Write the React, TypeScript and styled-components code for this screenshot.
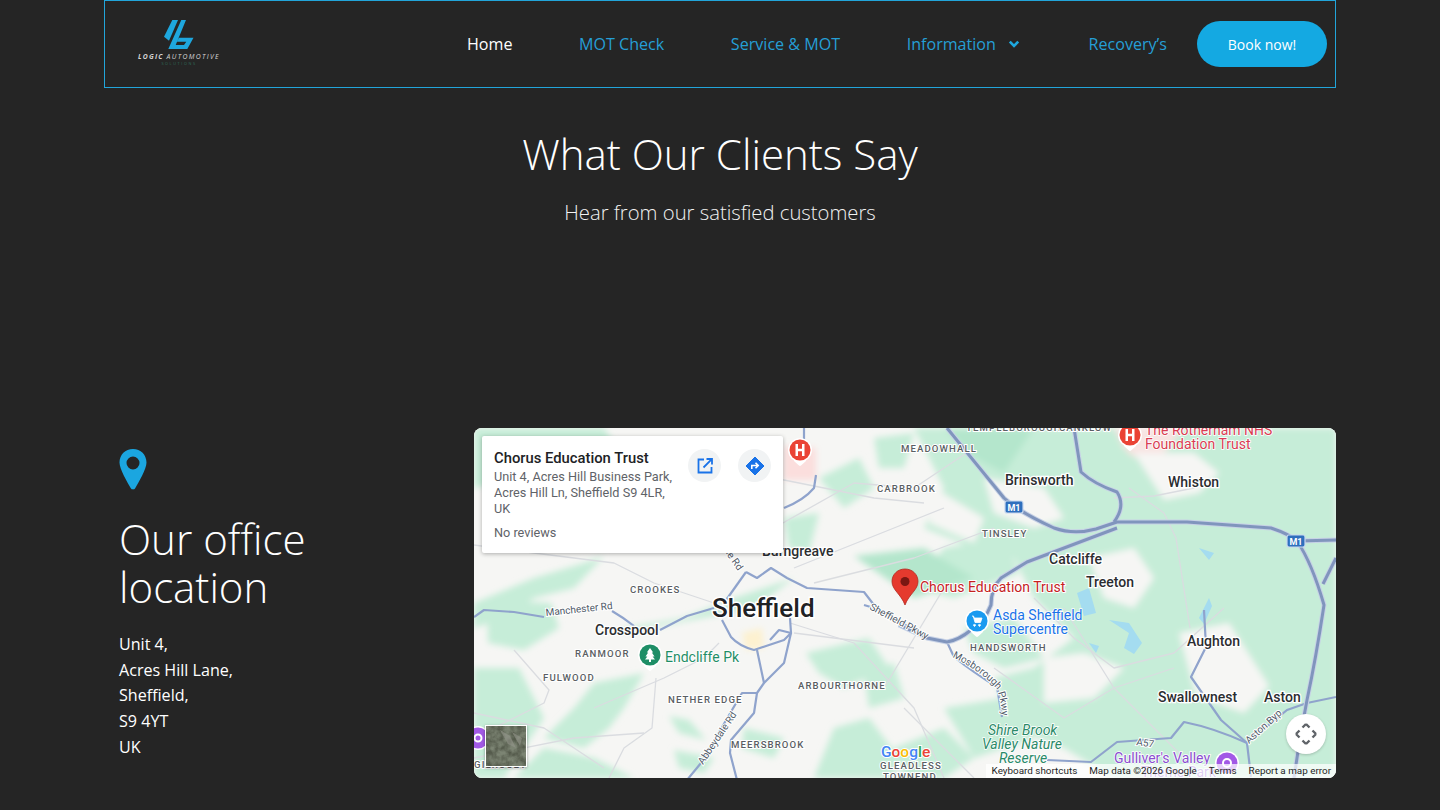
import React from "react";
import styled, { createGlobalStyle } from "styled-components";

const Global = createGlobalStyle`
  html, body { margin: 0; padding: 0; background: #252525; overflow: hidden; }
  body { font-family: "Open Sans", "Liberation Sans", sans-serif; color: #fff; }
`;

const Page = styled.div`
  width: 1232px;
  margin: 0 auto;
  height: 810px;
`;

const Header = styled.header`
  box-sizing: border-box;
  height: 88px;
  border: 1px solid #22a5da;
  display: flex;
  align-items: center;
  padding: 0 8px 0 32px;
`;

const LogoBox = styled.div`
  width: 84px;
  display: flex;
  flex-direction: column;
  align-items: center;
  margin-top: -2px;
`;

const LogoMark = styled.svg`
  display: block;
  margin-left: -1px;
`;

const LogoName = styled.div`
  font: italic 700 6.8px/8px "Open Sans", sans-serif;
  letter-spacing: 1.2px;
  white-space: nowrap;
  color: #d5d5d5;
  margin-top: 4px;
  & > span { font-weight: 400; letter-spacing: 1.35px; }
`;

const LogoSub = styled.div`
  font: 400 3.8px/5px "Open Sans", sans-serif;
  letter-spacing: 1.6px;
  color: #2f6a58;
  white-space: nowrap;
`;

const Nav = styled.nav`
  margin-left: auto;
  display: flex;
  align-items: center;
  gap: 66.6px;
`;

const NavLink = styled.a<{ $active?: boolean }>`
  font-size: 16.1px;
  line-height: 24px;
  color: ${(p) => (p.$active ? "#ffffff" : "#259fd6")};
  display: flex;
  align-items: center;
  gap: 12px;
  white-space: nowrap;
`;

const ChevronIcon = styled.svg`
  margin-right: 2px;
`;

const BookButton = styled.a`
  margin-left: 30px;
  width: 130px;
  height: 46px;
  border-radius: 23px;
  background: #14a9e2;
  color: #fff;
  font-size: 14px;
  display: flex;
  align-items: center;
  justify-content: center;
`;

const Intro = styled.section`
  padding-top: 36px;
  height: 304px;
  box-sizing: border-box;
  text-align: center;
`;

const IntroTitle = styled.h2`
  margin: 0;
  font-size: 42px;
  line-height: 60px;
  font-weight: 300;
  color: #fff;
`;

const IntroSub = styled.p`
  margin: 13px 0 0;
  font-size: 20.25px;
  line-height: 30px;
  font-weight: 300;
  color: #f2f2f2;
`;

const Location = styled.section`
  margin-top: 36px;
  display: flex;
  align-items: stretch;
`;

const Office = styled.div`
  width: 370px;
  box-sizing: border-box;
  padding: 21px 0 0 15px;
`;

const OfficeTitle = styled.h3`
  margin: 20px 0 0;
  font-size: 42px;
  line-height: 48px;
  font-weight: 300;
  color: #fff;
`;

const Address = styled.p`
  margin: 21px 0 0;
  font-size: 16.1px;
  line-height: 25.7px;
  color: #fff;
`;

const MapFrame = styled.div`
  position: relative;
  width: 862px;
  height: 350px;
  border-radius: 8px;
  overflow: hidden;
  background: #f6f6f4;
  font-family: Roboto, "Liberation Sans", sans-serif;
`;

const MapSvg = styled.svg`
  display: block;
  & path { stroke-linejoin: round; }
`;

const InfoCard = styled.div`
  position: absolute;
  left: 8px;
  top: 8px;
  width: 301px;
  height: 117px;
  box-sizing: border-box;
  padding: 13px 12px;
  background: #fff;
  border-radius: 2px;
  box-shadow: 0 1px 4px rgba(0, 0, 0, 0.3);
  display: flex;
  justify-content: space-between;
`;

const InfoText = styled.div`
  width: 182px;
`;

const InfoName = styled.div`
  font-size: 14.8px;
  line-height: 18px;
  font-weight: 500;
  color: #202124;
  white-space: nowrap;
`;

const InfoAddress = styled.div`
  margin-top: 2px;
  font-size: 12.7px;
  line-height: 16px;
  color: #5f6368;
`;

const InfoReviews = styled.div`
  margin-top: 8px;
  font-size: 12.7px;
  line-height: 16px;
  color: #5f6368;
`;

const InfoActions = styled.div`
  display: flex;
  gap: 17px;
`;

const RoundAction = styled.div`
  width: 33px;
  height: 33px;
  border-radius: 50%;
  background: #f1f3f4;
  display: flex;
  align-items: center;
  justify-content: center;
`;

const FullscreenButton = styled.div`
  position: absolute;
  right: 10px;
  bottom: 24px;
  width: 40px;
  height: 40px;
  border-radius: 50%;
  background: #fff;
  box-shadow: 0 1px 3px rgba(0, 0, 0, 0.2);
  display: flex;
  align-items: center;
  justify-content: center;
`;

const Satellite = styled.div`
  position: absolute;
  left: 11px;
  bottom: 11px;
  width: 40px;
  height: 40px;
  border: 1.5px solid #fff;
  box-shadow: 0 1px 3px rgba(0, 0, 0, 0.35);
  overflow: hidden;
`;

const Attribution = styled.div`
  position: absolute;
  right: 0;
  bottom: 0;
  display: flex;
  font-size: 9.9px;
  line-height: 14px;
  color: #1f1f1f;
  white-space: nowrap;
`;

const AttributionItem = styled.span`
  padding: 0 6px;
  background: rgba(255, 255, 255, 0.72);
  &:last-child { padding-right: 5px; }
`;

const Label = styled.text<{ $kind: string }>`
  font-family: Roboto, "Liberation Sans", sans-serif;
  ${(p) =>
    p.$kind === "city"
      ? "font-size: 26px; font-weight: 500; fill: #202124; stroke: #fff; stroke-width: 3px; paint-order: stroke;"
      : p.$kind === "town"
      ? "font-size: 14px; font-weight: 500; fill: #2b2d30; stroke: #fff; stroke-width: 2.5px; paint-order: stroke;"
      : p.$kind === "area"
      ? "font-size: 9.6px; font-weight: 500; letter-spacing: 1.1px; fill: #5a5e63; stroke: #fff; stroke-width: 2px; paint-order: stroke;"
      : p.$kind === "road"
      ? "font-size: 10px; fill: #4f5a68; stroke: #fff; stroke-width: 2px; paint-order: stroke;"
      : p.$kind === "red"
      ? "font-size: 14px; fill: #c5221f; stroke: #fff; stroke-width: 2px; paint-order: stroke;"
      : p.$kind === "hospital"
      ? "font-size: 14px; fill: #d93c52; stroke: #fff; stroke-width: 1.5px; paint-order: stroke;"
      : p.$kind === "shop"
      ? "font-size: 14px; fill: #1a73e8; stroke: #fff; stroke-width: 1.5px; paint-order: stroke;"
      : p.$kind === "park"
      ? "font-size: 14px; fill: #1e8e66; stroke: #fff; stroke-width: 1.5px; paint-order: stroke;"
      : p.$kind === "reserve"
      ? "font-size: 14px; font-style: italic; fill: #2a8a68; stroke: #fff; stroke-width: 1.5px; paint-order: stroke;"
      : p.$kind === "fun"
      ? "font-size: 14px; fill: #8a4fd0; stroke: #fff; stroke-width: 1.5px; paint-order: stroke;"
      : ""}
`;

const greens: string[] = [
  "M440 0 L862 0 L862 350 L640 350 L590 320 L540 300 L520 250 L560 240 L600 210 L560 170 L540 130 L500 120 L450 100 L470 60 Z",
  "M0 0 L130 0 L150 30 L0 60 Z",
  "M0 175 L60 150 L110 135 L130 128 L100 160 L60 170 L30 190 L0 200 Z",
  "M13 172 L77 175 L85 200 L50 222 L14 215 Z",
  "M150 205 L280 180 L320 150 L260 170 L210 190 L150 200 Z",
  "M0 240 L45 240 L70 290 L30 350 L0 350 Z",
  "M120 255 L170 245 L150 280 L135 300 L110 320 L70 310 L100 280 Z",
  "M70 320 L120 330 L160 350 L40 350 Z",
  "M195 288 L215 292 L232 312 L205 305 Z",
  "M200 322 L240 330 L230 345 L205 340 Z",
  "M345 50 L385 30 L400 60 L370 80 Z",
  "M400 10 L440 5 L430 40 L405 40 Z",
  "M310 90 L345 85 L335 125 L315 120 Z",
  "M332 225 L395 210 L415 240 L370 260 L345 245 Z",
  "M390 245 L420 235 L430 270 L395 280 Z",
  "M360 300 L395 290 L425 330 L420 350 L340 350 Z",
  "M270 300 L310 310 L300 330 L268 320 Z",
  "M420 320 L470 300 L500 330 L470 350 L430 350 Z",
  "M490 200 L540 190 L570 230 L530 240 L500 225 Z",
  "M470 120 L530 110 L545 145 L480 170 L440 160 Z",
  "M470 280 L530 270 L560 290 L560 310 L500 330 Z",
  "M560 240 L640 220 L650 280 L590 260 Z",
];

const whites: string[] = [
  "M615 130 L660 120 L680 150 L660 180 L630 170 Z",
  "M660 25 L720 25 L745 45 L725 65 L690 72 Z",
  "M705 205 L755 195 L795 258 L770 285 L722 268 Z",
  "M570 230 L610 225 L650 240 L620 270 L570 275 Z",
  "M510 50 L570 60 L590 90 L560 100 L520 85 Z",
  "M460 60 L510 90 L500 115 L455 95 Z",
];

const motorways: string[] = [
  "M473 0 L530 70 Q545 84 580 100 Q600 107 622 101 L643 94 L713 94 L797 100 Q815 106 823 113 L862 112",
  "M823 113 Q838 135 850 177 Q842 230 833 272 L826 310 L820 350",
  "M862 130 L849 156",
  "M600 0 L607 44 Q620 56 643 64 Q652 78 640 94",
  "M643 100 L553 134 L527 150 Q517 160 517 177 Q510 195 497 202 Q485 212 473 214 L453 210 L425 197",
];

const aRoads: string[] = [
  "M390 177 L400 180 L420 190 L453 210",
  "M473 214 L480 229 Q500 245 523 259 L528 289",
  "M342 47 L340 60 Q330 72 310 80",
  "M330 0 L330 20",
  "M272 144 L283 150 L297 140 L313 150 L333 160 L390 164 L400 177",
  "M272 144 L250 175",
  "M248 192 L257 209 Q265 218 280 222 L310 212 L317 205 L305 202 L296 212",
  "M283 222 L290 255 L310 235 L317 205 L316 190",
  "M290 255 L283 265 L268 265 L227 335 L213 352",
  "M283 265 L280 285 L257 312 L256 325 L263 352",
  "M0 189 L10 182 L40 184 L70 189",
  "M138 183 Q150 190 160 198",
  "M186 202 L213 188 L240 180",
  "M573 332 L617 334 L643 314 L697 310 L710 294 Q740 300 773 315 L813 282 L833 275 L862 269",
  "M730 182 L732 219 L717 249 L747 292 L773 315 L777 349",
];

const minor: string[] = [
  "M160 60 L250 35 L300 50 L400 70 L450 75",
  "M300 100 L380 55 L440 60 L500 20",
  "M320 140 L420 100 L470 80",
  "M340 155 L440 130 L520 100",
  "M0 117 L60 125 L140 135 L180 155 L240 175",
  "M40 222 L75 262 L70 275 L20 300",
  "M120 280 L190 250 L230 230 L245 215",
  "M182 250 L178 300 L150 320 L135 350",
  "M0 330 L100 310 L170 305",
  "M316 195 L380 215 L440 280 L470 350",
  "M320 205 L440 220",
  "M655 60 L690 85 L702 110 L716 200",
  "M640 70 L680 68 L720 60 L740 50",
  "M470 160 L440 210 L410 260",
  "M560 170 L600 210 L640 240 L700 225 L750 180",
  "M590 180 L640 260 L700 320 L730 350",
  "M0 285 L70 300 L130 340",
  "M430 280 L470 320 L500 350",
  "M520 240 L590 290 L640 260 L700 240",
];

const labels: [string, number, number, string][] = [
  ["MEADOWHALL", 427, 24, "area"],
  ["CARBROOK", 403, 64, "area"],
  ["TINSLEY", 508, 109, "area"],
  ["TEMPLEBOROUGH", 492, 3, "area"],
  ["CANKLOW", 585, 3, "area"],
  ["Brinsworth", 531, 57, "town"],
  ["Whiston", 694, 59, "town"],
  ["Catcliffe", 575, 136, "town"],
  ["Treeton", 612, 159, "town"],
  ["Burngreave", 288, 128, "town"],
  ["CROOKES", 156, 165, "area"],
  ["Sheffield", 238, 189, "city"],
  ["Crosspool", 121, 207, "town"],
  ["RANMOOR", 101, 229, "area"],
  ["FULWOOD", 69, 253, "area"],
  ["NETHER EDGE", 194, 275, "area"],
  ["ARBOURTHORNE", 324, 261, "area"],
  ["MEERSBROOK", 257, 320, "area"],
  ["HANDSWORTH", 496, 223, "area"],
  ["Aughton", 713, 218, "town"],
  ["Swallownest", 684, 274, "town"],
  ["Aston", 790, 274, "town"],
  ["GLEADLESS", 406, 341, "area"],
  ["TOWNEND", 409, 352, "area"],
];

const Logo = () => (
  <LogoMark width="30" height="29" viewBox="0 0 30 29" aria-hidden>
    <path d="M8.3 0H14L5 20.7L0 16.7Z" fill="#1ea7de" />
    <path d="M17.3 0H22L11.7 25H20L22.3 21.7H13L15 17.7H29.5L23.3 29H4.3Z" fill="#1ea7de" />
  </LogoMark>
);

const Pin = () => (
  <svg width="28" height="41" viewBox="0 0 28 41" aria-hidden>
    <path
      fillRule="evenodd"
      d="M14 0C6.3 0 0.5 5.8 0.5 13.5C0.5 20 8.5 33.5 11.8 39.2C12.8 40.8 15.2 40.8 16.2 39.2C19.5 33.5 27.5 20 27.5 13.5C27.5 5.8 21.7 0 14 0ZM14 7.5A6.5 6.5 0 1 1 14 20.5A6.5 6.5 0 1 1 14 7.5Z"
      fill="#1ba6e0"
    />
  </svg>
);

const Chevron = () => (
  <ChevronIcon width="12" height="12" viewBox="0 0 12 12" aria-hidden>
    <path d="M1.8 3.6L6 7.8L10.2 3.6" fill="none" stroke="#1ea7de" strokeWidth="2.6" />
  </ChevronIcon>
);

const Marker = ({ x, y, color, children }: { x: number; y: number; color: string; children?: React.ReactNode }) => (
  <g transform={`translate(${x} ${y})`}>
    <path d="M0 14.5L-4.5 10.5L4.5 10.5Z" fill="#fff" stroke="#fff" strokeWidth="3" strokeLinejoin="round" />
    <circle r="12" fill="#fff" />
    <circle r="10.5" fill={color} />
    {children}
  </g>
);

const HospitalGlyph = () => <path d="M-4.5 -6H-2V-1.2H2V-6H4.5V6H2V1.2H-2V6H-4.5Z" fill="#fff" />;

const MapArt = () => (
  <MapSvg width="862" height="350" viewBox="0 0 862 350">
    <defs>
      <filter id="soft" x="-5%" y="-5%" width="110%" height="110%">
        <feGaussianBlur stdDeviation="3" />
      </filter>
      <path id="mosboroughPath" d="M478 229 Q508 244 522 260 Q528 272 528 295" />
    </defs>
    <rect width="862" height="350" fill="#f6f6f4" />
    <g filter="url(#soft)">
      {greens.map((d) => (
        <path key={d} d={d} fill="#c6edd8" />
      ))}
      <path d="M470 0 L560 0 L530 45 L500 30 Z M380 128 L450 120 L500 150 L440 170 Z" fill="#b4e6cc" />
      <path d="M640 0 L710 0 L690 25 Q665 40 650 20 Z" fill="#f8e4e2" />
      <path d="M310 18 L342 20 L342 52 L310 52 Z" fill="#fbdedd" />
      <path d="M268 205 L288 200 L290 220 L272 222 Z" fill="#fdf1d0" />
      {whites.map((d) => (
        <path key={d} d={d} fill="#f6f6f4" />
      ))}
    </g>
    <path d="M603 165 L615 160 L622 185 L610 188 Z M635 192 L655 195 L668 215 L660 226 L650 220 L655 205 Z M615 215 L625 218 L622 225 Z M725 120 L740 125 L735 132 Z" fill="#a4dcf0" />
    <path d="M725 190 L735 170 L738 178 L730 196 Z" fill="#a4dcf0" />
    {minor.map((d) => (
      <path key={d} d={d} fill="none" stroke="#dadce0" strokeWidth="1.3" />
    ))}
    {aRoads.map((d) => (
      <path key={d} d={d} fill="none" stroke="#8fa3cc" strokeWidth="2.2" />
    ))}
    {motorways.map((d) => (
      <path key={`c${d}`} d={d} fill="none" stroke="#c7d2e6" strokeWidth="5" />
    ))}
    {motorways.map((d) => (
      <path key={d} d={d} fill="none" stroke="#8095bd" strokeWidth="3" />
    ))}
    {[
      [540, 79],
      [822, 113],
    ].map(([x, y]) => (
      <g key={x}>
        <rect x={x - 9} y={y - 6} width="18" height="12" rx="2" fill="#2f6fbd" stroke="#c8d8ee" strokeWidth="1.2" />
        <text x={x} y={y + 3.5} textAnchor="middle" fontSize="9" fontWeight="700" fill="#fff" fontFamily="Roboto, sans-serif">
          M1
        </text>
      </g>
    ))}
    {labels.map(([t, x, y, k]) => (
      <Label key={t} x={x} y={y} $kind={k}>
        {t}
      </Label>
    ))}
    <Label x={72} y={188} $kind="road" transform="rotate(-6 72 188)">Manchester Rd</Label>
    <Label x={395} y={181} $kind="road" transform="rotate(28 395 181)">Sheffield Pkwy</Label>
    <Label $kind="road"><textPath href="#mosboroughPath">Mosborough Pkwy</textPath></Label>
    <Label x={229} y={337} $kind="road" transform="rotate(-56 229 337)">Abbeydale Rd</Label>
    <Label x={250} y={123} $kind="road" transform="rotate(55 250 123)">ile Rd</Label>
    <Label x={775} y={316} $kind="road" transform="rotate(-42 775 316)">Aston Byp</Label>
    <Label x={662} y={317} $kind="road" transform="rotate(8 662 317)">A57</Label>

    <Marker x={326} y={22} color="#ea4335"><HospitalGlyph /></Marker>
    <Marker x={656} y={7} color="#ea4335"><HospitalGlyph /></Marker>
    <Label x={671} y={7} $kind="hospital">The Rotherham NHS</Label>
    <Label x={671} y={21} $kind="hospital">Foundation Trust</Label>

    <Marker x={503} y={193} color="#1a9af0">
      <path d="M-5 -5H-3.5L-2.8 -3H5L3.5 1.5H-2L-3.5 -4M-2.5 3.4A0.9 0.9 0 1 0 -2.49 3.4M2.5 3.4A0.9 0.9 0 1 0 2.51 3.4" fill="#fff" stroke="#fff" strokeWidth="0.8" />
    </Marker>
    <Label x={519} y={192} $kind="shop">Asda Sheffield</Label>
    <Label x={519} y={206} $kind="shop">Supercentre</Label>

    <Marker x={176} y={227} color="#1e8e66">
      <path d="M0 -7L3.2 -2.5H1.8L4.5 1.5H2.6L5 4.5H1V7H-1V4.5H-5L-2.6 1.5H-4.5L-1.8 -2.5H-3.2Z" fill="#fff" />
    </Marker>
    <Label x={191} y={234} $kind="park">Endcliffe Pk</Label>

    <Label x={514} y={307} $kind="reserve">Shire Brook</Label>
    <Label x={508} y={321} $kind="reserve">Valley Nature</Label>
    <Label x={525} y={335} $kind="reserve">Reserve</Label>

    <Label x={640} y={335} $kind="fun">Gulliver's Valley</Label>
    <Marker x={753} y={335} color="#a259e6">
      <circle r="4" fill="none" stroke="#fff" strokeWidth="2" />
    </Marker>
    <Label x={667} y={349} $kind="fun">Theme Park</Label>

    <g transform="translate(-7 310)">
      <circle r="12" cx="11" fill="#fff" />
      <circle r="10.5" cx="11" fill="#a259e6" />
      <circle r="3.5" cx="11" fill="none" stroke="#fff" strokeWidth="2" />
    </g>
    <Label x={0} y={340} $kind="area">GILROSEY</Label>

    <g transform="translate(431 158)">
      <path
        d="M0 -17C-7.5 -17 -13 -11.5 -13 -4.5C-13 4 -4 8 0 19C4 8 13 4 13 -4.5C13 -11.5 7.5 -17 0 -17Z"
        fill="#e53a2e"
        stroke="#b3261e"
        strokeWidth="0.8"
      />
      <circle cy="-4.5" r="4.5" fill="#7a1712" />
    </g>
    <Label x={446} y={164} $kind="red">Chorus Education Trust</Label>

    <text x="407" y="329" fontFamily="Roboto, sans-serif" fontSize="15.5" fontWeight="500" stroke="#fff" strokeWidth="2" paintOrder="stroke">
      <tspan fill="#4285f4">G</tspan>
      <tspan fill="#ea4335">o</tspan>
      <tspan fill="#fbbc05">o</tspan>
      <tspan fill="#4285f4">g</tspan>
      <tspan fill="#34a853">l</tspan>
      <tspan fill="#ea4335">e</tspan>
    </text>
  </MapSvg>
);

export default function App() {
  return (
    <Page>
      <Global />
      <Header>
        <LogoBox>
          <Logo />
          <LogoName>
            LOGIC <span>AUTOMOTIVE</span>
          </LogoName>
          <LogoSub>SOLUTIONS</LogoSub>
        </LogoBox>
        <Nav>
          <NavLink $active>Home</NavLink>
          <NavLink>MOT Check</NavLink>
          <NavLink>Service &amp; MOT</NavLink>
          <NavLink>
            Information <Chevron />
          </NavLink>
          <NavLink>Recovery’s</NavLink>
        </Nav>
        <BookButton>Book now!</BookButton>
      </Header>

      <Intro>
        <IntroTitle>What Our Clients Say</IntroTitle>
        <IntroSub>Hear from our satisfied customers</IntroSub>
      </Intro>

      <Location>
        <Office>
          <Pin />
          <OfficeTitle>
            Our office
            <br />
            location
          </OfficeTitle>
          <Address>
            Unit 4,
            <br />
            Acres Hill Lane,
            <br />
            Sheffield,
            <br />
            S9 4YT
            <br />
            UK
          </Address>
        </Office>

        <MapFrame>
          <MapArt />
          <InfoCard>
            <InfoText>
              <InfoName>Chorus Education Trust</InfoName>
              <InfoAddress>Unit 4, Acres Hill Business Park, Acres Hill Ln, Sheffield S9 4LR, UK</InfoAddress>
              <InfoReviews>No reviews</InfoReviews>
            </InfoText>
            <InfoActions>
              <RoundAction>
                <svg width="20" height="20" viewBox="0 0 20 20" aria-hidden>
                  <path d="M9 3.5H3.5V16.5H16.5V11M11.5 3H17V8.5M16.8 3.2L8.5 11.5" fill="none" stroke="#1a73e8" strokeWidth="1.8" />
                </svg>
              </RoundAction>
              <RoundAction>
                <svg width="20" height="20" viewBox="0 0 20 20" aria-hidden>
                  <path d="M10 1L19 10L10 19L1 10Z" fill="#1a73e8" stroke="#1a73e8" strokeLinejoin="round" />
                  <path d="M6.8 13V9.5H12.5M10.5 6.8L13.2 9.5L10.5 12.2" fill="none" stroke="#fff" strokeWidth="1.6" />
                </svg>
              </RoundAction>
            </InfoActions>
          </InfoCard>

          <Satellite>
            <svg width="40" height="40" viewBox="0 0 40 40" aria-hidden>
              <filter id="terrain">
                <feTurbulence type="fractalNoise" baseFrequency="0.16" numOctaves="3" seed="4" />
                <feColorMatrix values="0 0 0 0 0.2  0 0 0 0 0.23  0 0 0 0 0.17  2 0 0 0 -0.45" />
              </filter>
              <rect width="40" height="40" fill="#555b4c" />
              <rect width="40" height="40" filter="url(#terrain)" />
              <path d="M14 4L24 10L30 22L22 18Z M26 6L36 12L34 20Z" fill="#93958a" opacity="0.6" />
            </svg>
          </Satellite>

          <FullscreenButton>
            <svg width="24" height="24" viewBox="0 0 24 24" aria-hidden>
              <path d="M12 2L8.5 5.5M12 2L15.5 5.5M12 22L8.5 18.5M12 22L15.5 18.5M2 12L5.5 8.5M2 12L5.5 15.5M22 12L18.5 8.5M22 12L18.5 15.5" fill="none" stroke="#5f6368" strokeWidth="2.4" />
            </svg>
          </FullscreenButton>

          <Attribution>
            <AttributionItem>Keyboard shortcuts</AttributionItem>
            <AttributionItem>Map data ©2026 Google</AttributionItem>
            <AttributionItem>Terms</AttributionItem>
            <AttributionItem>Report a map error</AttributionItem>
          </Attribution>
        </MapFrame>
      </Location>
    </Page>
  );
}
